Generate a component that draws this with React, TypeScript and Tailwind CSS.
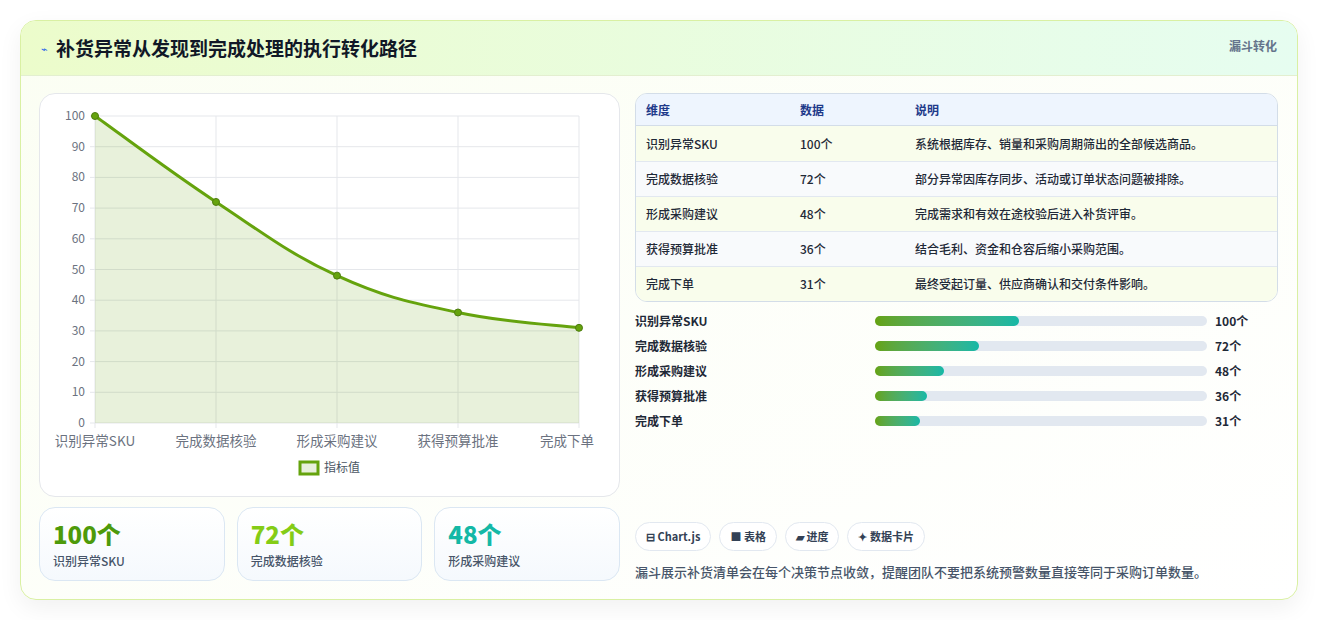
const font = { fontFamily: '"Noto Sans CJK SC", "Noto Sans", sans-serif' };

const steps = [
  { name: "识别异常SKU", value: 100, note: "系统根据库存、销量和采购周期筛出的全部候选商品。" },
  { name: "完成数据核验", value: 72, note: "部分异常因库存同步、活动或订单状态问题被排除。" },
  { name: "形成采购建议", value: 48, note: "完成需求和有效在途校验后进入补货评审。" },
  { name: "获得预算批准", value: 36, note: "结合毛利、资金和仓容后缩小采购范围。" },
  { name: "完成下单", value: 31, note: "最终受起订量、供应商确认和交付条件影响。" },
];

function Chart() {
  const W = 580;
  const x0 = 55, x1 = 539, yTop = 22, yBot = 329;
  const pts = steps.map((s, i) => [x0 + ((x1 - x0) / 4) * i, yBot - ((yBot - yTop) * s.value) / 100]);
  let d = `M${pts[0][0]},${pts[0][1]}`;
  for (let i = 0; i < pts.length - 1; i++) {
    const p0 = pts[Math.max(0, i - 1)], p1 = pts[i], p2 = pts[i + 1], p3 = pts[Math.min(pts.length - 1, i + 2)];
    const t = 0.2;
    const c1 = [p1[0] + (p2[0] - p0[0]) * t, p1[1] + (p2[1] - p0[1]) * t];
    const c2 = [p2[0] - (p3[0] - p1[0]) * t, p2[1] - (p3[1] - p1[1]) * t];
    d += ` C${c1[0]},${c1[1]} ${c2[0]},${c2[1]} ${p2[0]},${p2[1]}`;
  }
  const area = `${d} L${x1},${yBot} L${x0},${yBot} Z`;
  return (
    <svg width={W} height={400} viewBox={`0 0 ${W} 400`} style={font}>
      {Array.from({ length: 11 }, (_, i) => {
        const y = yBot - ((yBot - yTop) * i) / 10;
        return (
          <g key={i}>
            <line x1={x0 - 5} x2={x1} y1={y} y2={y} stroke="#e5e7eb" />
            <text x={x0 - 10} y={y + 4} textAnchor="end" fontSize="12" fill="#6b7280">{i * 10}</text>
          </g>
        );
      })}
      {pts.map((p, i) => (
        <line key={i} x1={p[0]} x2={p[0]} y1={yTop} y2={yBot + 5} stroke="#e5e7eb" />
      ))}
      <path d={area} fill="#65a30d" fillOpacity="0.15" />
      <path d={d} fill="none" stroke="#65a30d" strokeWidth="3" />
      {pts.map((p, i) => (
        <circle key={i} cx={p[0]} cy={p[1]} r="3.5" fill="#65a30d" stroke="#4d7c0f" />
      ))}
      {pts.map((p, i) => (
        <text key={i} x={i === 4 ? p[0] - 12 : p[0]} y={352} textAnchor="middle" fontSize="13.5" fill="#6b7280">{steps[i].name}</text>
      ))}
      <rect x={260} y={368} width={18} height={12} fill="#e8f0dc" stroke="#65a30d" strokeWidth="3" />
      <text x={284} y={378} fontSize="12" fill="#4b5563">指标值</text>
    </svg>
  );
}

export default function App() {
  const stats = [
    { v: "100个", l: "识别异常SKU", c: "text-[#4d9a0a]" },
    { v: "72个", l: "完成数据核验", c: "text-[#84cc16]" },
    { v: "48个", l: "形成采购建议", c: "text-[#14b8a6]" },
  ];
  return (
    <div className="min-h-[620px] bg-white p-5" style={font}>
      <div className="overflow-hidden rounded-2xl border border-[#d9f0a3] bg-gradient-to-br from-[#fbfef3] to-white shadow-[0_8px_24px_rgba(0,0,0,0.06)]">
        <div className="flex h-[55px] items-start justify-between border-b border-[#e3efd0] bg-gradient-to-r from-[#ecfccb] to-[#e6fdf0] px-5 pt-[13px]">
          <div className="flex items-center gap-2">
            <span className="text-[11px] text-[#2563eb]">⌁</span>
            <h1 className="text-[19px] font-bold text-[#111827]">补货异常从发现到完成处理的执行转化路径</h1>
          </div>
          <span className="pt-[3px] text-[12px] font-bold text-[#64748b]">漏斗转化</span>
        </div>
        <div className="flex gap-[15px] pb-[18px] pl-[18px] pr-[18px] pt-[17px]">
          <div className="flex w-[581px] flex-col gap-[10px]">
            <div className="h-[404px] rounded-2xl border border-[#e5e7eb] bg-white">
              <Chart />
            </div>
            <div className="grid grid-cols-3 gap-3">
              {stats.map((s) => (
                <div key={s.l} className="h-[74px] rounded-2xl border border-[#dbe7f3] bg-gradient-to-b from-white to-[#f5f9fd] px-[13px] pt-[10px]">
                  <div className={`text-[24px] font-extrabold leading-[32px] ${s.c}`}>{s.v}</div>
                  <div className="mt-[2px] text-[12px] font-medium text-[#475569]">{s.l}</div>
                </div>
              ))}
            </div>
          </div>
          <div className="flex w-[643px] flex-col">
            <div className="overflow-hidden rounded-xl border border-[#d3dde8]">
              <div className="flex h-[32px] items-center border-b border-[#d3dde8] bg-[#eef5fe] text-[12px] font-bold text-[#1e3a8a]">
                <div className="w-[164px] pl-[10px]">维度</div>
                <div className="w-[115px]">数据</div>
                <div>说明</div>
              </div>
              {steps.map((s, i) => (
                <div key={s.name} className={`flex h-[35px] items-center text-[12px] font-medium text-[#1f2937] ${i > 0 ? "border-t border-[#e2e8f0]" : ""} ${i % 2 === 0 ? "bg-[#f9fdec]" : "bg-[#f8fafc]"}`}>
                  <div className="w-[164px] pl-[10px]">{s.name}</div>
                  <div className="w-[115px]">{s.value}个</div>
                  <div>{s.note}</div>
                </div>
              ))}
            </div>
            <div className="mt-[10px] flex flex-col gap-[7px]">
              {steps.map((s) => (
                <div key={s.name} className="flex h-[18px] items-center text-[12px] font-semibold text-[#1f2937]">
                  <div className="w-[240px]">{s.name}</div>
                  <div className="h-[10px] w-[332px] rounded-full bg-[#e2e8f0]">
                    <div className="h-full rounded-full bg-gradient-to-r from-[#65a30d] to-[#14b8a6]" style={{ width: `${s.value * 1.44}px` }} />
                  </div>
                  <div className="pl-[8px] font-bold">{s.value}个</div>
                </div>
              ))}
            </div>
            <div className="mt-auto flex gap-[8px]">
              {["⊟ Chart.js", "■ 表格", "▰ 进度", "✦ 数据卡片"].map((c) => (
                <span key={c} className="rounded-full border border-[#e2e8f0] bg-white px-[10px] py-[5px] text-[11px] font-bold text-[#334155]">{c}</span>
              ))}
            </div>
            <p className="mt-[11px] text-[13px] font-medium text-[#475569]">漏斗展示补货清单会在每个决策节点收敛，提醒团队不要把系统预警数量直接等同于采购订单数量。</p>
          </div>
        </div>
      </div>
    </div>
  );
}
